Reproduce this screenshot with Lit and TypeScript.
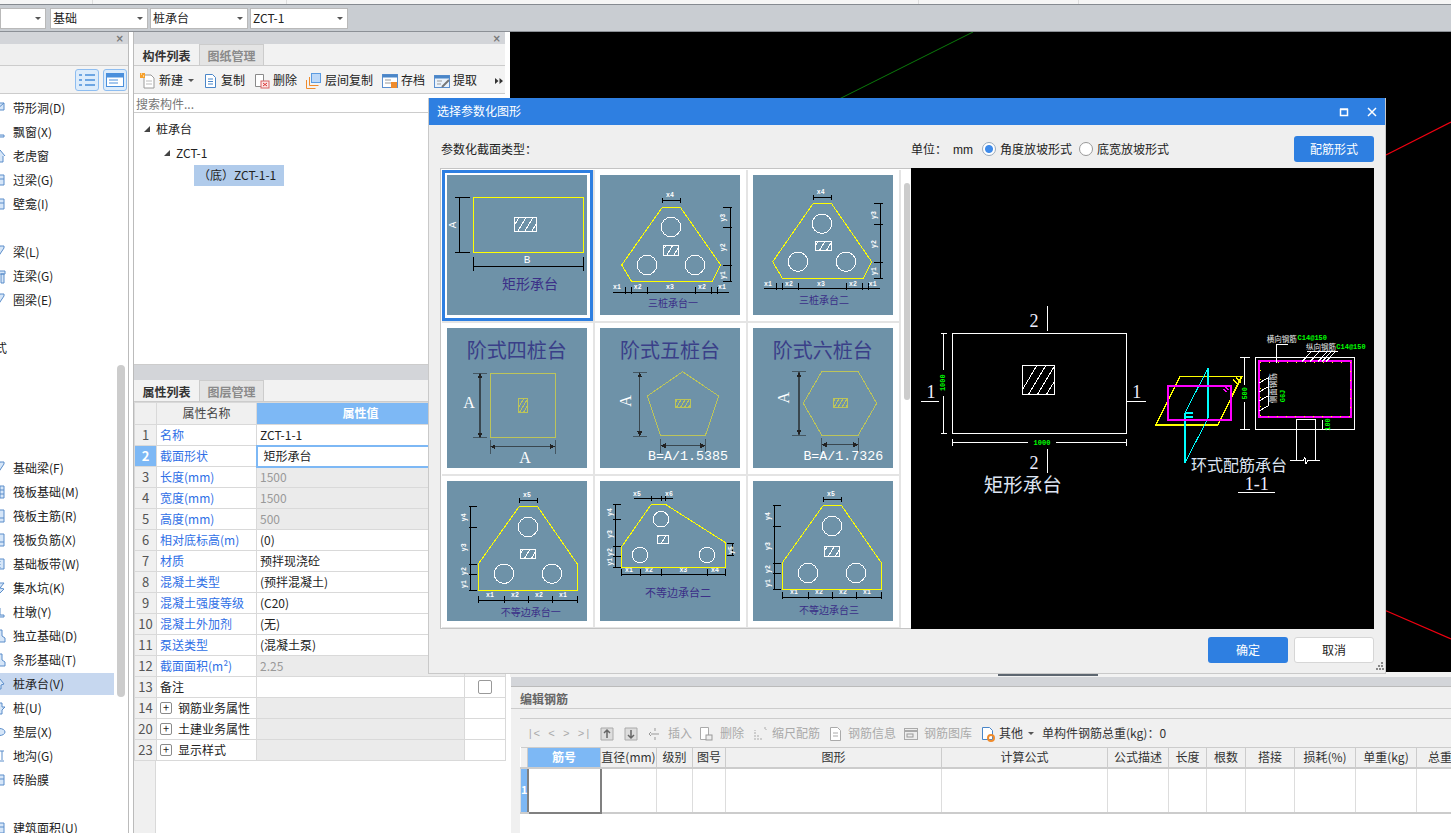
import { LitElement, html, css, svg } from 'lit';
import { customElement } from 'lit/decorators.js';

// [label, icon key]; null leaves an empty row in the component list
const COMPONENTS: ([string, string] | null)[] = [
  ['带形洞(D)', 'slab'], ['飘窗(X)', 'sill'], ['老虎窗', 'house'], ['过梁(G)', 'box'], ['壁龛(I)', 'box'],
  null,
  ['梁(L)', 'beam'], ['连梁(G)', 'tee'], ['圈梁(E)', 'beam'],
  null,
  ['式', ''],
  null, null, null, null,
  ['基础梁(F)', 'beam'], ['筏板基础(M)', 'grid'], ['筏板主筋(R)', 'doc'], ['筏板负筋(X)', 'doc'],
  ['基础板带(W)', 'dots'], ['集水坑(K)', 'pit'], ['柱墩(Y)', 'pier'], ['独立基础(D)', 'foot'],
  ['条形基础(T)', 'foot'], ['桩承台(V)', 'cap'], ['桩(U)', 'pile'], ['垫层(X)', 'disc'],
  ['地沟(G)', 'ditch'], ['砖胎膜', 'box'],
  null,
  ['建筑面积(U)', 'box'],
];

const LIST_ICONS: Record<string, string> = {
  slab: 'M2 3h8v7H2zM2 10l8-7',
  sill: 'M2 11h8v2H2z',
  house: 'M1 8l5-6 5 6M3 8v6h6V8',
  box: 'M3 3h7v10H3zM3 7h7',
  beam: 'M4 13l6-9V2H6L2 8',
  tee: 'M1 3h10v3H1zM7 6h3v9H7z',
  grid: 'M2 2h8v12H2zM2 6h8M2 10h8M6 2v12',
  doc: 'M3 2h7v12H3zM5 10h5',
  dots: 'M2 3h8v10H2zM6 5v1M6 8v1M6 11v1',
  pit: 'M3 3h7L6 8l4 1-5 5',
  pier: 'M1 13h9v-2H6V4H4v7H1z',
  foot: 'M3 2h5v6l3 2v4H3z',
  cap: 'M1 8l5-5 4 5-3 1v4H4V9z',
  pile: 'M5 3h3v4h3l-3 3v4H5V10L2 7h3z',
  disc: 'M0 8a5.5 3.5 0 1 0 11 0a5.5 3.5 0 1 0-11 0',
  ditch: 'M2 3h8M5 3v9M8 3v9M2 13h8',
};

type Num = number;
interface Dim { at: Num; ticks: Num[]; span?: [Num, Num]; labels: [string, Num, Num][] }
interface Pile {
  poly: Num[][];
  circles: Num[][];
  hatch: [Num, Num, Num, Num];
  top: Dim;
  side: Dim;
  bottom: Dim;
  extra?: Dim;
  caption: [string, Num, Num, Num];
}

const hatchBox = (x: Num, y: Num, w: Num, h: Num, cls = 'wh', step = 7) => svg`
  <rect class=${cls} x=${x} y=${y} width=${w} height=${h}></rect>
  <svg x=${x} y=${y} width=${w} height=${h}>
    ${Array.from({ length: Math.ceil((w + h) / step) }, (_, i) => svg`
      <line class=${cls} x1=${i * step - 3} y1=${h} x2=${i * step + h * 0.6 - 3} y2="0"></line>`)}
  </svg>`;

const tinyLabel = ([t, x, y]: [string, Num, Num], rotated: boolean) => svg`
  <text class="tiny" x=${x} y=${y} transform=${rotated ? `rotate(-90 ${x} ${y})` : ''}>${t}</text>`;

const hDim = (d: Dim, tick: [Num, Num]) => {
  const s = d.span ?? [d.ticks[0], d.ticks[d.ticks.length - 1]];
  return svg`
    <line class="bk" x1=${s[0]} y1=${d.at} x2=${s[1]} y2=${d.at}></line>
    ${d.ticks.map((t) => svg`<line class="bk" x1=${t} y1=${d.at + tick[0]} x2=${t} y2=${d.at + tick[1]}></line>`)}
    ${d.labels.map((l) => tinyLabel(l, false))}`;
};

const vDim = (d: Dim, tick: [Num, Num]) => svg`
  <line class="bk" x1=${d.at} y1=${d.ticks[0]} x2=${d.at} y2=${d.ticks[d.ticks.length - 1]}></line>
  ${d.ticks.map((t) => svg`<line class="bk" x1=${d.at + tick[0]} y1=${t} x2=${d.at + tick[1]} y2=${t}></line>`)}
  ${d.labels.map((l) => tinyLabel(l, true))}`;

const pileThumb = (p: Pile) => svg`
  ${hDim(p.top, [-2, 3])}
  ${vDim(p.side, p.side.at > 70 ? [-7, 2] : [-2, 6])}
  ${hDim(p.bottom, [-5, 2])}
  ${p.extra ? vDim(p.extra, [-5, 2]) : ''}
  <polygon class="yl" points=${p.poly.map((q) => q.join(',')).join(' ')}></polygon>
  ${p.circles.map((c) => svg`<circle class="wh" cx=${c[0]} cy=${c[1]} r=${c[2]}></circle>`)}
  ${hatchBox(...p.hatch)}
  <text class="cap" x=${p.caption[1]} y=${p.caption[2]} style="font-size:${p.caption[3]}px">${p.caption[0]}</text>`;

const PILES: Pile[] = [
  {
    poly: [[62.3, 32.3], [80.3, 32.3], [120.7, 90], [112.3, 106], [31.3, 106], [21.7, 90]],
    circles: [[71, 52, 9.7], [47, 90, 9.7], [95, 90, 9.7]],
    hatch: [63, 70.3, 15.7, 9.7],
    top: { at: 25.3, ticks: [62.3, 80.3], labels: [['x4', 70, 20.5]] },
    side: { at: 130, ticks: [32.3, 52.3, 90.3, 106], labels: [['y3', 123.3, 42.7], ['y2', 123.3, 72.3], ['y1', 123.3, 100]] },
    bottom: { at: 117.3, ticks: [25.7, 31.3, 47.3, 95.7, 111.7, 117.3], span: [13, 129], labels: [['x1', 17, 112.5], ['x2', 37.7, 112.5], ['x3', 70, 112.5], ['x2', 102, 112.5], ['x1', 122, 112.5]] },
    caption: ['三桩承台一', 73, 127, 10],
  },
  {
    poly: [[60.3, 28.3], [78.3, 28.3], [118.7, 86.7], [110.3, 103.3], [29.3, 103.3], [19.7, 86.7]],
    circles: [[69, 48.7, 9.7], [45, 86.7, 9.7], [93, 86.7, 9.7]],
    hatch: [62.3, 66.3, 16.4, 9.4],
    top: { at: 22, ticks: [60.3, 78.3], labels: [['x4', 67.7, 17.3]] },
    side: { at: 127.7, ticks: [28.3, 49.3, 87.3, 103.3], labels: [['y3', 121, 40], ['y2', 121, 69], ['y1', 121, 96]] },
    bottom: { at: 113.3, ticks: [23.7, 29.3, 45.3, 93.7, 109.7, 115.3], span: [11, 127], labels: [['x1', 15, 109], ['x2', 36, 109], ['x3', 68, 109], ['x2', 100, 109], ['x1', 119.7, 109]] },
    caption: ['三桩承台二', 71, 124, 10],
  },
  {
    poly: [[72.3, 25.3], [90.3, 25.3], [130.3, 83], [130.3, 109], [31.3, 109], [31.3, 83]],
    circles: [[81, 46, 9.7], [57, 92.7, 9.7], [105, 92.7, 9.7]],
    hatch: [73.3, 68.3, 15.4, 9.4],
    top: { at: 19.3, ticks: [72.3, 90.3], labels: [['x5', 80, 14.3]] },
    side: { at: 23.7, ticks: [25.3, 46.3, 83, 93.7, 109], labels: [['y4', 17.3, 36.3], ['y3', 17.3, 66.3], ['y2', 17.3, 90], ['y1', 17.3, 103]] },
    bottom: { at: 119.7, ticks: [31.3, 57.3, 81.3, 105.3, 130.3], labels: [['x1', 43, 114.7], ['x2', 68, 114.7], ['x2', 92, 114.7], ['x1', 116, 114.7]] },
    caption: ['不等边承台一', 83.7, 130, 10],
  },
  {
    poly: [[51.3, 23.3], [65.3, 23.3], [125.7, 61.7], [125.7, 86.3], [21.7, 86.3], [21.7, 65.7]],
    circles: [[61, 38.3, 7.8], [40, 74, 7.8], [107, 74, 7.8]],
    hatch: [57.3, 54.3, 11.4, 8],
    top: { at: 17.3, ticks: [51.3, 61.3, 65.3], span: [34, 73], labels: [['x5', 37, 13], ['x6', 69, 13]] },
    side: { at: 15, ticks: [23.3, 38.3, 65.7, 75, 86.3], labels: [['y4', 10.7, 31], ['y3', 10.7, 53], ['y2', 10.7, 71], ['y1', 10.7, 80.7]] },
    bottom: { at: 93.3, ticks: [21.7, 40, 61.3, 107, 125.7], labels: [['x1', 29, 89.5], ['x2', 49, 89.5], ['x3', 83.3, 89.5], ['x4', 115, 89.5]] },
    extra: { at: 132, ticks: [62.3, 74.3], labels: [['y5', 131, 69]] },
    caption: ['不等边承台二', 78, 110.7, 11],
  },
  {
    poly: [[70.3, 24.3], [88.3, 24.3], [128.3, 81.7], [128.3, 108.3], [29.3, 108.3], [29.3, 81.7]],
    circles: [[79, 45, 9.7], [55, 92, 9.7], [103, 92, 9.7]],
    hatch: [71.3, 65.3, 15.4, 10],
    top: { at: 18.3, ticks: [70.3, 88.3], labels: [['x5', 78, 13.3]] },
    side: { at: 21.7, ticks: [24.3, 45.3, 82.3, 92.3, 108.3], labels: [['y4', 15, 35], ['y3', 15, 65], ['y2', 15, 88], ['y1', 15, 102]] },
    bottom: { at: 116.3, ticks: [29.3, 55.3, 79.3, 103.3, 128.3], labels: [['x1', 41, 111.5], ['x2', 66, 111.5], ['x2', 90, 111.5], ['x1', 114, 111.5]] },
    caption: ['不等边承台三', 76, 128.3, 10],
  },
];

const arrowDim = (x1: Num, y1: Num, x2: Num, y2: Num) => svg`
  <line class="dk" x1=${x1} y1=${y1} x2=${x2} y2=${y2}></line>
  ${x1 === x2
    ? svg`<polygon class="ah" points="${x1 - 2.5},${y1 + 5} ${x1},${y1} ${x1 + 2.5},${y1 + 5}"></polygon>
          <polygon class="ah" points="${x1 - 2.5},${y2 - 5} ${x1},${y2} ${x1 + 2.5},${y2 - 5}"></polygon>
          <line class="dk thin" x1=${x1 - 7} y1=${y1} x2=${x1 + 7} y2=${y1}></line>
          <line class="dk thin" x1=${x1 - 7} y1=${y2} x2=${x1 + 7} y2=${y2}></line>`
    : svg`<polygon class="ah" points="${x1 + 5},${y1 - 2.5} ${x1},${y1} ${x1 + 5},${y1 + 2.5}"></polygon>
          <polygon class="ah" points="${x2 - 5},${y1 - 2.5} ${x2},${y1} ${x2 - 5},${y1 + 2.5}"></polygon>
          <line class="dk thin" x1=${x1} y1=${y1 - 7} x2=${x1} y2=${y1 + 7}></line>
          <line class="dk thin" x1=${x2} y1=${y1 - 7} x2=${x2} y2=${y1 + 7}></line>`}`;

const THUMBS = [
  svg`
    <rect class="yl" x="26.3" y="22.3" width="110" height="55"></rect>
    <line class="bk" x1="12.7" y1="22.3" x2="12.7" y2="77.3"></line>
    <line class="bk" x1="8" y1="22.3" x2="23" y2="22.3"></line>
    <line class="bk" x1="8" y1="77.3" x2="23" y2="77.3"></line>
    <text class="small" x="6" y="50" transform="rotate(-90 6 50)">A</text>
    ${hatchBox(67, 42, 22, 14)}
    <line class="bk" x1="26.3" y1="91.7" x2="136.3" y2="91.7"></line>
    <line class="bk" x1="26.3" y1="82" x2="26.3" y2="96"></line>
    <line class="bk" x1="136.3" y1="82" x2="136.3" y2="96"></line>
    <text class="small" x="80" y="84.5">B</text>
    <text class="cap" x="83" y="108" style="font-size:14px">矩形承台</text>`,
  pileThumb(PILES[0]),
  pileThumb(PILES[1]),
  svg`
    <text class="ttl" x="69.7" y="21.5">阶式四桩台</text>
    <rect class="ol" x="43.3" y="45" width="65.4" height="64.7"></rect>
    ${hatchBox(71.3, 70.3, 9.4, 14.4, 'ol', 4)}
    ${arrowDim(33, 45, 33, 109.7)}
    ${arrowDim(43.3, 118.7, 108, 118.7)}
    <text class="big" x="22" y="74.7">A</text>
    <text class="big" x="78" y="129">A</text>`,
  svg`
    <text class="ttl" x="70" y="21.5">阶式五桩台</text>
    <polygon class="ol" points="82.7,43.7 118.7,68 105.3,107.7 60.7,107.7 47.3,68"></polygon>
    ${hatchBox(75.3, 71, 15.4, 8.7, 'ol', 4)}
    ${arrowDim(39.7, 44.3, 39.7, 108.3)}
    ${arrowDim(60.7, 117.7, 105.3, 117.7)}
    <text class="big" x="25" y="73" transform="rotate(-90 25 73)">A</text>
    <text class="form" x="88" y="128">B=A/1.5385</text>`,
  svg`
    <text class="ttl" x="69.7" y="21.5">阶式六桩台</text>
    <polygon class="ol" points="68.7,43.7 105.3,43.7 123.7,75.3 105.3,107 68.7,107 50.3,75.3"></polygon>
    ${hatchBox(80, 70.3, 14.7, 9, 'ol', 4)}
    ${arrowDim(46, 43.7, 46, 107.3)}
    ${arrowDim(68.7, 116.7, 105.3, 116.7)}
    <text class="big" x="30.3" y="69.7" transform="rotate(-90 30.3 69.7)">A</text>
    <text class="form" x="90.3" y="128">B=A/1.7326</text>`,
  pileThumb(PILES[2]),
  pileThumb(PILES[3]),
  pileThumb(PILES[4]),
];

const PREVIEW = svg`
  <rect class="pv-w" x="41.5" y="165.5" width="174" height="100"></rect>
  ${hatchBox(111.5, 197.5, 32, 29, 'pv-w', 9)}
  <text class="pv-n" x="123" y="153">2</text>
  <line class="pv-w" x1="136.5" y1="138" x2="136.5" y2="162.5"></line>
  <text class="pv-n" x="123" y="295">2</text>
  <line class="pv-w" x1="136.5" y1="281" x2="136.5" y2="304.5"></line>
  <text class="pv-n" x="20" y="224">1</text>
  <line class="pv-w" x1="10" y1="233.5" x2="28" y2="233.5"></line>
  <text class="pv-n" x="225.7" y="224">1</text>
  <line class="pv-w" x1="215.5" y1="233.5" x2="234.7" y2="233.5"></line>
  <line class="pv-w" x1="32.5" y1="165" x2="32.5" y2="266"></line>
  <line class="pv-w" x1="30" y1="165.5" x2="36" y2="165.5"></line>
  <line class="pv-w" x1="30" y1="265.5" x2="36" y2="265.5"></line>
  <rect class="pv-b" x="29" y="202" width="8" height="26"></rect>
  <text class="pv-g" x="32.5" y="214.7" transform="rotate(-90 32.5 214.7)">1000</text>
  <line class="pv-w" x1="41" y1="274.5" x2="216" y2="274.5"></line>
  <line class="pv-w" x1="41.5" y1="271" x2="41.5" y2="278"></line>
  <line class="pv-w" x1="215.5" y1="271" x2="215.5" y2="278"></line>
  <rect class="pv-b" x="117" y="270" width="28" height="9"></rect>
  <text class="pv-g" x="131" y="274.5">1000</text>
  <text class="pv-t" x="111.7" y="315" style="font-size:19.5px">矩形承台</text>

  <polygon class="pv-y" points="269,208.7 330.7,208.7 306.7,257 244.7,257"></polygon>
  <path class="pv-c" d="M297 200.3L273.7 245.3M273.7 295.3L297 250.3"></path>
  <path class="pv-c bold" d="M297 200.3V250.3M273.7 245.3V295.3M273.7 245.3H282M273.7 249H282"></path>
  <rect class="pv-m" x="256.7" y="217.7" width="63" height="34.3"></rect>
  <path class="pv-y" d="M325 210l5 4M322 212l4 3"></path>
  <path class="pv-m thin" d="M314 219l4 3M312 221l4 3"></path>

  <rect class="pv-w" x="344.5" y="189.5" width="99" height="72"></rect>
  <rect class="pv-m" x="348" y="192.7" width="92" height="56.3"></rect>
  <rect class="pv-d" x="349" y="194" width="90" height="54"></rect>
  <line class="pv-w" x1="333.5" y1="189.5" x2="333.5" y2="261.5"></line>
  <line class="pv-w" x1="329" y1="189.5" x2="339" y2="189.5"></line>
  <line class="pv-w" x1="329" y1="261.5" x2="339" y2="261.5"></line>
  <rect class="pv-b" x="330" y="217" width="7" height="17"></rect>
  <text class="pv-g" x="333.7" y="225.3" transform="rotate(-90 333.7 225.3)">500</text>
  <path class="pv-w" d="M385.5 292V251.5H404.5V292M379 292.5H392l2-3 1 6 2-3H409"></path>
  <path class="pv-w" d="M411 251.5V261.5"></path>
  <text class="pv-g" x="417.3" y="256.5" transform="rotate(-90 417.3 256.5)">100</text>
  <path class="pv-w" d="M377.3 176H365.5V195"></path>
  <text class="pv-l" x="370.7" y="170">横向钢筋</text>
  <text class="pv-g" x="401.3" y="170">C14@150</text>
  <text class="pv-l" x="410" y="178.7">纵向钢筋</text>
  <text class="pv-g" x="440" y="178.7">C14@150</text>
  <path class="pv-w" d="M395.7 183.7H426.7M400 183.7l-9 10M408 183.7l-9 10M416 183.7l-9 10M424 183.7l-9 10M420 183.7l-9 10"></path>
  <path class="pv-w" d="M348 215l9-5v28l-9 5M348 224l9-5M348 233l9-5"></path>
  <text class="pv-l" x="361.7" y="220.3" transform="rotate(-90 361.7 220.3)">侧面钢筋</text>
  <text class="pv-g" x="371.7" y="228" transform="rotate(-90 371.7 228)">G6J</text>
  <text class="pv-t" x="328" y="295.5" style="font-size:16px">环式配筋承台</text>
  <text class="pv-n" x="345.7" y="316">1-1</text>
  <line class="pv-w" x1="327.3" y1="324.5" x2="364" y2="324.5"></line>`;

const ic = (body: unknown, size = 16) => html`<svg class="ic" width=${size} height="16" viewBox="0 0 ${size} 16">${body}</svg>`;

const TOOL_ICONS = {
  add: svg`<path d="M4 2h7l3 3v10H4z" fill="#fff" stroke="#9a9a9a"></path><path d="M6 8h6M6 11h6" stroke="#bbb"></path><rect x="0" y="0" width="5" height="5" fill="#f6a12c"></rect><path d="M1 1h1M3 3h1" stroke="#fff"></path>`,
  copy: svg`<path d="M1.5 1.500h7l3 3v10h-10z" fill="#fff" stroke="#4a86c8"></path><path d="M4 6h5M4 8.500h5M4 11h5" stroke="#4a86c8"></path>`,
  del: svg`<path d="M1.500 1.500h8v12h-8z" fill="#fff" stroke="#8a8a8a"></path><rect x="7" y="8" width="8" height="7" fill="#fbe5e5" stroke="#d96262"></rect><path d="M9 10l4 3M13 10l-4 3" stroke="#d33"></path>`,
  floor: svg`<rect x="5.500" y="0.500" width="9" height="9" fill="#bcd8f8" stroke="#5b9be0"></rect><path d="M3.500 4v8.500h9M0.500 7v8.500h9" fill="none" stroke="#ef8b2c"></path>`,
  save: svg`<rect x="0.500" y="1.500" width="15" height="13" fill="#fff" stroke="#5b8fcf"></rect><rect x="0.500" y="1.500" width="15" height="3" fill="#4a86c8"></rect><path d="M3 7h6M3 10h6" stroke="#999"></path><rect x="9" y="9" width="6" height="6" fill="#ef8b2c"></rect>`,
  pick: svg`<rect x="0.500" y="2.500" width="15" height="12" fill="#eaf2fb" stroke="#5b8fcf"></rect><rect x="0.500" y="2.500" width="15" height="3" fill="#4a86c8"></rect><path d="M3 8h5M3 11h4" stroke="#999"></path><path d="M8 14l7-7" stroke="#777" stroke-width="2"></path>`,
};

// [icon, label, slot width, gap between icon and label]
const REBAR_TOOLS: [unknown, string, number, number][] = [
  [svg`<path d="M1 2h12v12H1z" fill="#ddd" stroke="#aaa"></path><path d="M7 12V5M4 7l3-3 3 3" fill="none" stroke="#666" stroke-width="1.500"></path>`, '', 24, 3],
  [svg`<path d="M1 2h12v12H1z" fill="#ddd" stroke="#aaa"></path><path d="M7 4v7M4 9l3 3 3-3" fill="none" stroke="#666" stroke-width="1.500"></path>`, '', 25, 3],
  [svg`<path d="M6 2v3M2 8h8M6 11v3M2 6l-2 2 2 2" fill="none" stroke="#999"></path>`, '插入', 50, 3],
  [svg`<path d="M1.500 1.500h8v12h-8z" fill="#fff" stroke="#aaa"></path><rect x="7" y="9" width="6" height="5" fill="#eee" stroke="#999"></rect>`, '删除', 54, 5],
  [svg`<path d="M2 14V4M5 14V8M8 14v-3M11 2h2v2" fill="none" stroke="#aaa" stroke-dasharray="2 1"></path>`, '缩尺配筋', 75, 3],
  [svg`<path d="M2.500 1.500h7l3 3v10h-10z" fill="#fff" stroke="#aaa"></path><path d="M5 7h5M5 10h5" stroke="#aaa"></path>`, '钢筋信息', 75, 4],
  [svg`<rect x="1.500" y="2.500" width="13" height="11" fill="#eee" stroke="#aaa"></rect><path d="M1 5h14" stroke="#aaa" stroke-width="2"></path><rect x="4" y="8" width="6" height="3" fill="none" stroke="#999"></rect>`, '钢筋图库', 77, 5],
];

const PROPS: [string, string, string, string?][] = [
  ['1', '名称', 'ZCT-1-1', ''],
  ['2', '截面形状', '矩形承台', 'edit'],
  ['3', '长度(mm)', '1500', 'off'],
  ['4', '宽度(mm)', '1500', 'off'],
  ['5', '高度(mm)', '500', 'off'],
  ['6', '相对底标高(m)', '(0)', ''],
  ['7', '材质', '预拌现浇砼', ''],
  ['8', '混凝土类型', '(预拌混凝土)', ''],
  ['9', '混凝土强度等级', '(C20)', ''],
  ['10', '混凝土外加剂', '(无)', ''],
  ['11', '泵送类型', '(混凝土泵)', ''],
  ['12', '截面面积(m²)', '2.25', 'off'],
  ['13', '备注', '', 'note'],
  ['14', '钢筋业务属性', '', 'group'],
  ['20', '土建业务属性', '', 'group'],
  ['23', '显示样式', '', 'group'],
];

const REBAR_COLS: [string, number][] = [
  ['筋号', 73], ['直径(mm)', 56], ['级别', 36], ['图号', 33], ['图形', 216], ['计算公式', 166],
  ['公式描述', 61], ['长度', 38], ['根数', 39], ['搭接', 49], ['损耗(%)', 61], ['单重(kg)', 61], ['总重', 47],
];

@customElement('app-root')
export class AppRoot extends LitElement {
  static styles = css`
    :host {
      display: block;
      position: relative;
      width: 1451px;
      height: 833px;
      overflow: hidden;
      background: #fff;
      color: #222;
      font: 12px/1.2 'Noto Sans CJK SC', 'Noto Sans', sans-serif;
    }
    * { box-sizing: border-box; }
    svg { display: block; flex: none; }

    .menu-edge {
      display: flex;
      height: 5px;
      background: #f5f5f5;
      border-bottom: 1px solid #858a90;
    }
    .menu-edge i { width: 1px; background: #ddd; }
    .selects {
      display: flex;
      align-items: center;
      gap: 2px;
      height: 27px;
      background: #c9cdd2;
      border-bottom: 1px solid #8c9096;
    }
    .sel {
      display: flex;
      align-items: center;
      justify-content: space-between;
      width: 98px;
      height: 21px;
      padding: 0 4px 0 2px;
      background: #fff;
      border: 1px solid #b9b9b9;
    }
    .sel:first-child { width: 46px; margin-right: 2px; }
    .sel b {
      border: 3px solid transparent;
      border-top: 3px solid #555;
      border-bottom: 0;
    }

    .main { display: flex; height: 801px; }
    .panel-bar {
      display: flex;
      align-items: center;
      justify-content: flex-end;
      height: 12px;
      padding-right: 4px;
      background: #d3d5d9;
      color: #777;
      font: bold 10px 'DejaVu Sans', sans-serif;
    }

    .left {
      display: flex;
      flex-direction: column;
      width: 129px;
      border-right: 1px solid #bbb;
    }
    .left-tabs { height: 22px; background: #efefef; border-bottom: 1px solid #ccc; }
    .left-tools {
      display: flex;
      justify-content: flex-end;
      align-items: center;
      gap: 4px;
      height: 28px;
      padding-right: 1px;
      background: #f3f3f3;
      border-bottom: 1px solid #ccc;
    }
    .view-btn {
      display: flex;
      align-items: center;
      justify-content: center;
      width: 24px;
      height: 22px;
      background: #ddecfb;
      border: 1px solid #8ebdf0;
      border-radius: 3px;
    }
    .left-body { display: flex; flex: 1; min-height: 0; overflow: hidden; }
    .list { width: 114px; padding-top: 2px; flex: none; }
    .row {
      display: flex;
      align-items: center;
      gap: 3px;
      height: 24px;
      white-space: nowrap;
    }
    .row .cut { margin-left: -5px; }
    .row.on { background: #c6d7ef; background-clip: content-box; padding: 1px 0; }
    .row svg { margin-left: -6px; }
    .row path { fill: #d6e6f8; stroke: #5a8dca; }
    .thumb-y {
      width: 8px;
      height: 332px;
      margin: 271px 0 0 3px;
      background: #ccc;
      border-radius: 4px;
    }

    .gut-a { width: 4px; }
    .gut-b { width: 5px; }

    .mid {
      display: flex;
      flex-direction: column;
      width: 372px;
      border-left: 1px solid #bbb;
    }
    .tabs {
      display: flex;
      height: 22px;
      background: #f2f2f2;
      border-bottom: 1px solid #ccc;
    }
    .tab {
      width: 65px;
      line-height: 23px;
      text-align: center;
      font-weight: 700;
      color: #333;
    }
    .tab.off { background: #e4e4e4; color: #8a8a8a; border: 1px solid #ccc; border-width: 1px 1px 0 1px; line-height: 21px; }
    .tools {
      display: flex;
      align-items: center;
      height: 28px;
      padding: 2px 0 0 6px;
      background: #f3f3f3;
      border-bottom: 1px solid #ccc;
    }
    .tool { display: flex; align-items: center; gap: 3px; margin-right: 9px; white-space: nowrap; }
    .caret {
      border: 3px solid transparent;
      border-top: 3px solid #555;
      border-bottom: 0;
      margin: 0 1px 0 2px;
    }
    .more { margin: 0 2px 0 auto; }
    .search { height: 19px; padding: 3px 0 0 2px; color: #777; border-bottom: 1px solid #ccc; }
    .tree { height: 252px; padding-top: 4px; border-bottom: 1px solid #ccc; }
    .node { display: flex; align-items: center; gap: 5px; height: 24px; }
    .node.l1 { padding-left: 9px; }
    .node.l2 { padding-left: 29px; }
    .node.l3 { margin-left: 60px; height: 21px; width: 90px; padding-left: 4px; background: #b0cbeb; }

    .prop-gap { height: 15px; background: #d3d5d9; }
    .props { flex: 1; display: flex; flex-direction: column; }
    table { border-collapse: collapse; table-layout: fixed; }
    .ptable { width: 371px; }
    .ptable td, .ptable th {
      height: 21px;
      padding: 0 3px;
      border: 1px solid #d9d9d9;
      font-weight: 400;
      white-space: nowrap;
      overflow: hidden;
    }
    .ptable th { height: 22px; background: #f0f0f0; color: #444; }
    .ptable th.hot { background: #7db8f5; color: #fff; font-weight: 700; }
    .ptable .no { background: #f0f0f0; color: #555; text-align: center; font-size: 13px; padding: 0; }
    .ptable .no.hot { background: #7db8f5; color: #fff; font-weight: 700; }
    .ptable .name { color: #2f6fe6; }
    .ptable .name.plain { color: #222; }
    .ptable .off { background: #ebebeb; color: #999; }
    .ptable .edit { padding-left: 6px; border: 2px solid #7db8f5; }
    .group { display: flex; align-items: center; gap: 6px; }
    .plus {
      width: 12px;
      height: 12px;
      flex: none;
      border: 1px solid #8a8a8a;
      border-radius: 2px;
      line-height: 9px;
      text-align: center;
      font-size: 11px;
    }
    .check {
      display: block;
      width: 14px;
      height: 14px;
      margin: 0 auto;
      border: 1px solid #999;
      border-radius: 2px;
    }
    .no-rest { flex: 1; width: 22px; background: #f0f0f0; border-right: 1px solid #d9d9d9; }

    .right { display: flex; flex-direction: column; flex: 1; min-width: 0; }
    .cad { position: relative; height: 640px; background: #000; }
    .cad svg { position: absolute; inset: 0; }
    .split { position: relative; height: 5px; background: #f2f2f2; }
    .grab { position: absolute; left: 488px; top: 2px; width: 100px; height: 2px; background: #5d6670; }
    .rebar { display: flex; flex-direction: column; flex: 1; margin-left: 1px; background: #fff; }
    .rebar-bar { height: 10px; background: #d3d5d9; border-bottom: 1px solid #bbb; }
    .rebar-head {
      height: 22px;
      line-height: 23px;
      padding-left: 9px;
      background: #f0f0f0;
      color: #666;
      font-weight: 700;
      border-bottom: 1px solid #ccc;
    }
    .rebar-body { flex: 1; display: flex; min-width: 0; background: #f0f0f0; padding: 9px 0 0 9px; }
    .rebar-box { flex: 1; min-width: 0; background: #fff; border-top: 1px solid #ccc; overflow: hidden; }
    .rebar-tools {
      display: flex;
      align-items: center;
      height: 28px;
      padding: 1px 0 0 7px;
      background: #f0f0f0;
      color: #aaa;
      white-space: nowrap;
    }
    .nav {
      display: flex;
      justify-content: space-between;
      width: 64px;
      margin-right: 9px;
      color: #aaa;
      font: 11px 'Liberation Mono', monospace;
    }
    .rtool { display: flex; align-items: center; flex: none; gap: 3px; }
    .dark { color: #333; }
    .rtable { width: 943px; }
    .rtable th {
      height: 20px;
      padding: 0;
      background: #f0f0f0;
      border: 1px solid #ccc;
      border-bottom: 2px solid #ccc;
      font-weight: 400;
      color: #333;
      white-space: nowrap;
      overflow: hidden;
    }
    .rtable th.hot { background: #7db8f5; color: #fff; font-weight: 700; }
    .rtable th.corner { width: 7px; border-left: 0; }
    .rtable td { height: 45px; border: 1px solid #ddd; border-bottom: 2px solid #ccc; }
    .rtable td.rh { background: #7db8f5; color: #fff; font-weight: 700; text-align: center; padding: 0; font-size: 11px; }
    .rtable td.cur { border: 2px solid #808080; }

    .dialog {
      position: absolute;
      left: 428px;
      top: 98px;
      display: flex;
      flex-direction: column;
      width: 958px;
      height: 576px;
      background: #efefef;
      border: 1px solid #c9c9c9;
      border-top: 0;
    }
    .dlg-title {
      display: flex;
      align-items: center;
      height: 27px;
      padding-left: 8px;
      background: #2e7fe1;
      color: #fff;
    }
    .dlg-title span { flex: 1; }
    .dlg-title svg { margin-right: 18px; }
    .dlg-title svg:last-child { margin-right: 8px; }
    .dlg-ctl { display: flex; align-items: center; height: 43px; padding: 5px 11px 0 12px; }
    .dlg-ctl .lbl { width: 470px; }
    .dlg-ctl .unit { width: 42px; }
    .dlg-ctl .mm { width: 29px; padding-top: 1px; font: 12px 'Liberation Sans', sans-serif; }
    .radio { display: flex; align-items: center; gap: 4px; margin-right: 7px; }
    .radio i {
      width: 14px;
      height: 14px;
      background: #fff;
      border: 1px solid #999;
      border-radius: 50%;
    }
    .radio i.on { background: radial-gradient(circle, #3f8bea 0 3.5px, #fff 4.5px); border-color: #9ab; }
    .btn {
      width: 80px;
      height: 26px;
      line-height: 26px;
      text-align: center;
      background: #2e7fe1;
      color: #fff;
      border-radius: 3px;
    }
    .btn.plain { background: #fff; color: #222; border: 1px solid #d6d6d6; line-height: 24px; }
    .dlg-ctl .btn { margin-left: auto; }

    .dlg-body { display: flex; height: 461px; padding: 0 11px; }
    .shapes {
      display: flex;
      width: 471px;
      background: #fff;
      border: 1px solid #c4c4c4;
      border-right: 0;
      overflow: hidden;
    }
    .grid { display: grid; grid-template-columns: repeat(3, 153px); grid-auto-rows: 153px; width: 459px; padding: 1px 0 0 1px; flex: none; }
    .cell { padding: 5px; border-right: 2px solid #e4e4e4; border-bottom: 2px solid #e4e4e4; }
    .cell.on { box-shadow: inset 0 0 0 3px #2e7fe1; }
    .thumb { width: 140px; height: 140px; background: #6e92a8; }
    .track { flex: 1; padding: 14px 1px 0 4px; }
    .track i { display: block; height: 217px; background: #ccc; border-radius: 3px; }
    .preview { width: 463px; height: 461px; background: #000; }

    .dlg-foot { display: flex; justify-content: flex-end; gap: 6px; padding: 8px 11px 0; }
    .grip { position: absolute; right: 1px; bottom: 3px; }

    text { text-anchor: middle; dominant-baseline: central; font-family: 'Noto Sans CJK SC', sans-serif; }
    .thumb svg, .preview svg { shape-rendering: crispEdges; }
    .yl { fill: none; stroke: #ffff00; }
    .wh { fill: none; stroke: #fff; }
    .bk { stroke: #000; }
    .ol { fill: none; stroke: #bcc45a; }
    .dk { stroke: #39474f; stroke-width: 1.500; }
    .dk.thin { stroke-width: 0.800; }
    .ah { fill: #222; }
    .tiny { fill: #fff; font: bold 6.500px 'Liberation Mono', monospace; }
    .small { fill: #fff; font: 11px 'Liberation Mono', monospace; }
    .cap { fill: #3b2f87; }
    .ttl { fill: #3a3f88; font-size: 20px; }
    .big { fill: #fff; font: 16px 'Liberation Serif', serif; }
    .form { fill: #fff; font: 13.300px 'Liberation Mono', monospace; }

    .pv-w { fill: none; stroke: #fff; }
    .pv-b { fill: #000; }
    .pv-y { fill: none; stroke: #ffff00; stroke-width: 1.500; }
    .pv-m { fill: none; stroke: #ff00ff; stroke-width: 2; }
    .pv-m.thin { stroke-width: 1; }
    .pv-c { fill: none; stroke: #00ffff; }
    .pv-c.bold { stroke-width: 2; }
    .pv-d { fill: none; stroke: #ffff00; stroke-dasharray: 1 8; }
    .pv-g { fill: #00ff00; font: bold 7px 'Liberation Mono', monospace; }
    .pv-l { fill: #eee; font-size: 7.500px; }
    .pv-n { fill: #eef; font: 18px 'Liberation Serif', serif; }
    .pv-t { fill: #dde4f2; }
  `;

  private renderLeft() {
    return html`
      <div class="left">
        <div class="panel-bar">×</div>
        <div class="left-tabs"></div>
        <div class="left-tools">
          <div class="view-btn">
            <svg width="18" height="14" viewBox="0 0 18 14"><path d="M1 2h3M1 7h3M1 12h3M7 2h10M7 7h10M7 12h10" stroke="#4a8fdc" stroke-width="1.500"></path></svg>
          </div>
          <div class="view-btn">
            <svg width="18" height="14" viewBox="0 0 18 14"><rect x="0.500" y="0.500" width="17" height="13" fill="#fff" stroke="#4a8fdc"></rect><rect x="0.500" y="0.500" width="17" height="4" fill="#4a8fdc"></rect><path d="M3 7h9M3 10h9" stroke="#4a8fdc"></path></svg>
          </div>
        </div>
        <div class="left-body">
          <div class="list">
            ${COMPONENTS.map((c) => {
              if (!c) return html`<div class="row"></div>`;
              if (!c[1]) return html`<div class="row"><span class="cut">${c[0]}</span></div>`;
              return html`
                <div class="row ${c[0] === '桩承台(V)' ? 'on' : ''}">
                  <svg width="16" height="16" viewBox="0 0 16 16"><path d=${LIST_ICONS[c[1]]}></path></svg>
                  <span>${c[0]}</span>
                </div>`;
            })}
          </div>
          <div class="thumb-y"></div>
        </div>
      </div>`;
  }

  private renderMid() {
    return html`
      <div class="mid">
        <div class="panel-bar">×</div>
        <div class="tabs"><div class="tab">构件列表</div><div class="tab off">图纸管理</div></div>
        <div class="tools">
          <div class="tool">${ic(TOOL_ICONS.add)}<span>新建</span><b class="caret"></b></div>
          <div class="tool">${ic(TOOL_ICONS.copy, 14)}<span>复制</span></div>
          <div class="tool">${ic(TOOL_ICONS.del)}<span>删除</span></div>
          <div class="tool">${ic(TOOL_ICONS.floor)}<span>层间复制</span></div>
          <div class="tool">${ic(TOOL_ICONS.save)}<span>存档</span></div>
          <div class="tool">${ic(TOOL_ICONS.pick)}<span>提取</span></div>
          <svg class="more" width="8" height="8" viewBox="0 0 8 8"><path d="M0 1l3.500 3L0 7zM4.500 1L8 4 4.500 7z" fill="#333"></path></svg>
        </div>
        <div class="search">搜索构件...</div>
        <div class="tree">
          <div class="node l1">${this.corner()}<span>桩承台</span></div>
          <div class="node l2">${this.corner()}<span>ZCT-1</span></div>
          <div class="node l3">（底）ZCT-1-1</div>
        </div>
        <div class="prop-gap"></div>
        <div class="tabs"><div class="tab">属性列表</div><div class="tab off">图层管理</div></div>
        <div class="props">
          <table class="ptable">
            <colgroup><col style="width:22px" /><col style="width:100px" /><col style="width:208px" /><col style="width:41px" /></colgroup>
            <tr><th></th><th>属性名称</th><th class="hot">属性值</th><th></th></tr>
            ${PROPS.map(([no, name, value, kind]) => html`
              <tr>
                <td class="no ${kind === 'edit' ? 'hot' : ''}">${no}</td>
                ${kind === 'group'
                  ? html`<td class="name plain"><div class="group"><span class="plus">+</span>${name}</div></td><td class="off"></td><td></td>`
                  : html`
                    <td class="name ${kind === 'note' ? 'plain' : ''}">${name}</td>
                    <td class=${kind || ''}>${value}</td>
                    <td class=${kind === 'off' ? 'off' : ''}>${kind === 'note' ? html`<i class="check"></i>` : ''}</td>`}
              </tr>`)}
          </table>
          <div class="no-rest"></div>
        </div>
      </div>`;
  }

  private corner() {
    return html`<svg width="8" height="8" viewBox="0 0 8 8"><path d="M7 1V7H1z" fill="#444"></path></svg>`;
  }

  private renderRebar() {
    return html`
      <div class="rebar">
        <div class="rebar-bar"></div>
        <div class="rebar-head">编辑钢筋</div>
        <div class="rebar-body">
          <div class="rebar-box">
            <div class="rebar-tools">
              <div class="nav"><span>|&lt;</span><span>&lt;</span><span>&gt;</span><span>&gt;|</span></div>
              ${REBAR_TOOLS.map(([icon, label, w, g]) => html`
                <div class="rtool" style="width:${w}px;gap:${g}px">${ic(icon)}<span>${label}</span></div>`)}
              <div class="rtool dark">
                ${ic(svg`<path d="M2.500 1.500h7l3 3v9h-10z" fill="#fff" stroke="#4a86c8"></path><circle cx="11" cy="12" r="3" fill="none" stroke="#ef8b2c" stroke-width="2"></circle>`)}
                <span>其他</span><b class="caret"></b>
              </div>
              <span class="dark" style="margin-left:7px">单构件钢筋总重(kg)：0</span>
            </div>
            <table class="rtable">
              <tr>
                <th class="corner"></th>
                ${REBAR_COLS.map(([t, w], i) => html`<th class=${i === 0 ? 'hot' : ''} style="width:${w}px">${t}</th>`)}
              </tr>
              <tr>
                <td class="rh">1</td>
                ${REBAR_COLS.map((_, i) => html`<td class=${i === 0 ? 'cur' : ''}></td>`)}
              </tr>
            </table>
          </div>
        </div>
      </div>`;
  }

  private renderDialog() {
    return html`
      <div class="dialog">
        <div class="dlg-title">
          <span>选择参数化图形</span>
          <svg width="10" height="10" viewBox="0 0 10 10"><path d="M1.500 2.500h7v6h-7z M1 2h8" fill="none" stroke="#fff" stroke-width="1.500"></path></svg>
          <svg width="10" height="10" viewBox="0 0 10 10"><path d="M1 1l8 8M9 1l-8 8" stroke="#fff" stroke-width="1.500"></path></svg>
        </div>
        <div class="dlg-ctl">
          <span class="lbl">参数化截面类型：</span>
          <span class="unit">单位：</span>
          <span class="mm">mm</span>
          <label class="radio"><i class="on"></i>角度放坡形式</label>
          <label class="radio"><i></i>底宽放坡形式</label>
          <div class="btn">配筋形式</div>
        </div>
        <div class="dlg-body">
          <div class="shapes">
            <div class="grid">
              ${THUMBS.map((t, i) => html`
                <div class="cell ${i === 0 ? 'on' : ''}">
                  <div class="thumb"><svg width="140" height="140" viewBox="0 0 140 140">${t}</svg></div>
                </div>`)}
            </div>
            <div class="track"><i></i></div>
          </div>
          <div class="preview"><svg width="463" height="461" viewBox="0 0 463 461">${PREVIEW}</svg></div>
        </div>
        <div class="dlg-foot">
          <div class="btn">确定</div>
          <div class="btn plain">取消</div>
        </div>
        <svg class="grip" width="8" height="8" viewBox="0 0 8 8"><path d="M5 0h2v2H5zM2 3h2v2H2zM5 3h2v2H5zM0 6h2v2H0zM3 6h2v2H3zM6 6h2v2H6z" fill="#888"></path></svg>
      </div>`;
  }

  render() {
    return html`
      <div class="menu-edge">
        <span style="width:92px"></span><i></i><span style="width:193px"></span><i></i>
        <span style="width:631px"></span><i></i><span style="width:159px"></span><i></i>
      </div>
      <div class="selects">
        <div class="sel"><span></span><b></b></div>
        <div class="sel"><span>基础</span><b></b></div>
        <div class="sel"><span>桩承台</span><b></b></div>
        <div class="sel"><span>ZCT-1</span><b></b></div>
      </div>
      <div class="main">
        ${this.renderLeft()}
        <div class="gut-a"></div>
        ${this.renderMid()}
        <div class="gut-b"></div>
        <div class="right">
          <div class="cad">
            <svg width="941" height="640" viewBox="0 0 941 640">
              <line x1="330" y1="66.600" x2="463" y2="0" stroke="#0a7a0a"></line>
              <line x1="876" y1="123" x2="941" y2="90" stroke="#f00010" stroke-width="1.200"></line>
              <line x1="876" y1="578.700" x2="941" y2="607" stroke="#f00010" stroke-width="1.200"></line>
            </svg>
          </div>
          <div class="split"><div class="grab"></div></div>
          ${this.renderRebar()}
        </div>
      </div>
      ${this.renderDialog()}
    `;
  }
}
